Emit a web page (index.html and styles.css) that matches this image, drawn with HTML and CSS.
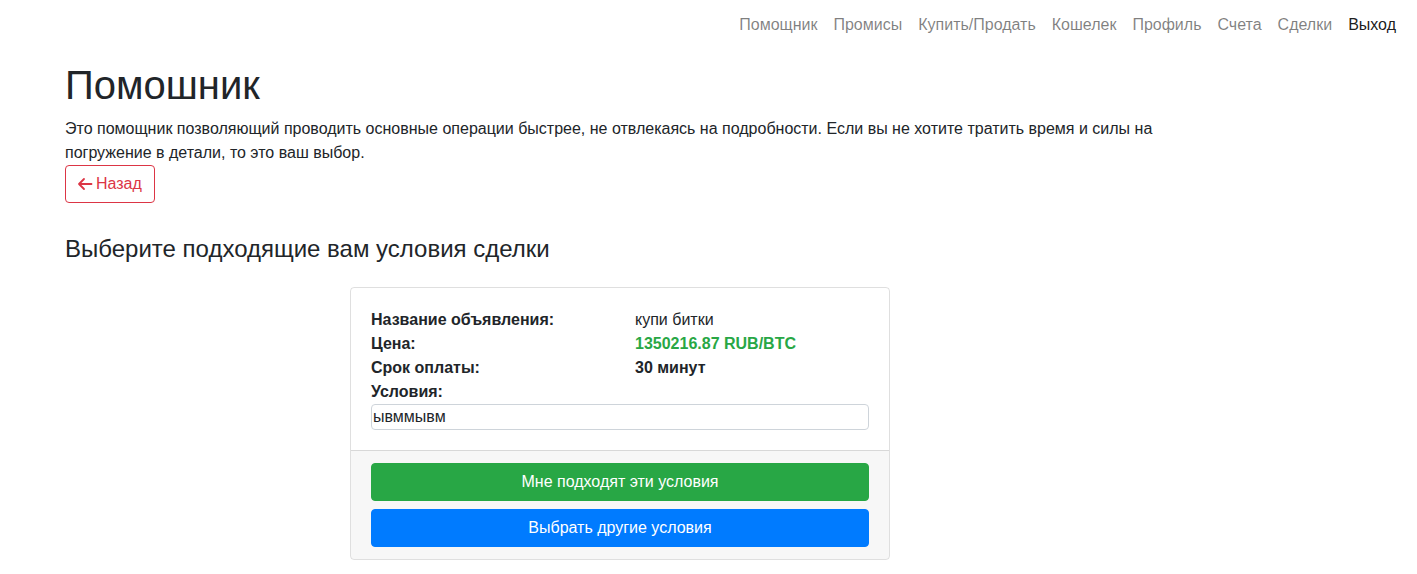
FILE: index.html
```html
<!DOCTYPE html>
<html lang="ru">
<head>
<meta charset="utf-8">
<title>Помощник</title>
<link rel="stylesheet" href="styles.css">
</head>
<body>
<nav class="navbar">
  <ul class="nav-list">
    <li><a class="nav-link" href="#">Помощник</a></li>
    <li><a class="nav-link" href="#">Промисы</a></li>
    <li><a class="nav-link" href="#">Купить/Продать</a></li>
    <li><a class="nav-link" href="#">Кошелек</a></li>
    <li><a class="nav-link" href="#">Профиль</a></li>
    <li><a class="nav-link" href="#">Счета</a></li>
    <li><a class="nav-link" href="#">Сделки</a></li>
    <li><a class="nav-link active" href="#">Выход</a></li>
  </ul>
</nav>
<main class="main">
  <h1 class="title">Помошник</h1>
  <p class="lead-text">Это помощник позволяющий проводить основные операции быстрее, не отвлекаясь на подробности. Если вы не хотите тратить время и силы на погружение в детали, то это ваш выбор.</p>
  <a class="btn btn-outline-danger" href="#"><svg class="arrow" width="16" height="16" viewBox="0 0 16 16" fill="none" stroke="currentColor" stroke-width="1.8" stroke-linecap="round" stroke-linejoin="round"><path d="M14.5 8H2M7 3 2 8l5 5"/></svg>Назад</a>
  <h4 class="subtitle">Выберите подходящие вам условия сделки</h4>
  <div class="card">
    <div class="card-body">
      <div class="row">
        <div class="col label">Название объявления:</div>
        <div class="col">купи битки</div>
      </div>
      <div class="row">
        <div class="col label">Цена:</div>
        <div class="col price">1350216.87 RUB/BTC</div>
      </div>
      <div class="row">
        <div class="col label">Срок оплаты:</div>
        <div class="col label">30 минут</div>
      </div>
      <div class="row">
        <div class="col label">Условия:</div>
      </div>
      <div class="terms">ывммывм</div>
    </div>
    <div class="card-footer">
      <button class="btn btn-block btn-success">Мне подходят эти условия</button>
      <button class="btn btn-block btn-primary">Выбрать другие условия</button>
    </div>
  </div>
</main>
</body>
</html>
```

FILE: styles.css
```css
* { box-sizing: border-box; }
html, body { margin: 0; padding: 0; }
body {
  font-family: "Liberation Sans", Arial, sans-serif;
  font-size: 16px;
  line-height: 1.5;
  color: #212529;
  background: #fff;
}
.navbar {
  display: flex;
  justify-content: flex-end;
  height: 48px;
  padding: 13px 13px 11px 0;
}
.nav-list {
  display: flex;
  list-style: none;
  margin: 0;
  padding: 0;
}
.nav-link {
  display: block;
  padding: 0 8px;
  color: rgba(0, 0, 0, 0.5);
  text-decoration: none;
}
.nav-link.active { color: rgba(0, 0, 0, 0.9); }
.main {
  padding: 13px 65px 0 65px;
}
.title {
  font-size: 40px;
  font-weight: 400;
  line-height: 1.2;
  margin: 0 0 8px 0;
}
.lead-text {
  max-width: 1150px;
  margin: 0;
}
.btn {
  display: inline-flex;
  align-items: center;
  justify-content: center;
  font-family: inherit;
  font-size: 16px;
  line-height: 24px;
  padding: 6px 12px;
  border: 1px solid transparent;
  border-radius: 4px;
  text-decoration: none;
  cursor: pointer;
}
.btn-outline-danger {
  color: #dc3545;
  border-color: #dc3545;
}
.arrow { margin: 0 3px 0 -1px; }
.subtitle {
  font-size: 24px;
  font-weight: 400;
  line-height: 1.2;
  margin: 32px 0 0 0;
}
.card {
  width: 540px;
  margin: 23px 0 0 285px;
  border: 1px solid rgba(0, 0, 0, 0.125);
  border-radius: 4px;
  overflow: hidden;
}
.card-body { padding: 20px; }
.row { display: flex; }
.col { flex: 0 0 auto; }
.row .col:first-child { width: 264px; }
.label { font-weight: 700; }
.price { color: #28a745; font-weight: 700; }
.terms {
  border: 1px solid #ced4da;
  border-radius: 4px;
  line-height: 24px;
  padding: 0 1px;
}
.card-footer {
  background: rgba(0, 0, 0, 0.03);
  border-top: 1px solid rgba(0, 0, 0, 0.125);
  padding: 12px 20px;
  display: flex;
  flex-direction: column;
  gap: 8px;
}
.btn-block { width: 100%; }
.btn-success { background: #28a745; border-color: #28a745; color: #fff; }
.btn-primary { background: #007bff; border-color: #007bff; color: #fff; }
```
